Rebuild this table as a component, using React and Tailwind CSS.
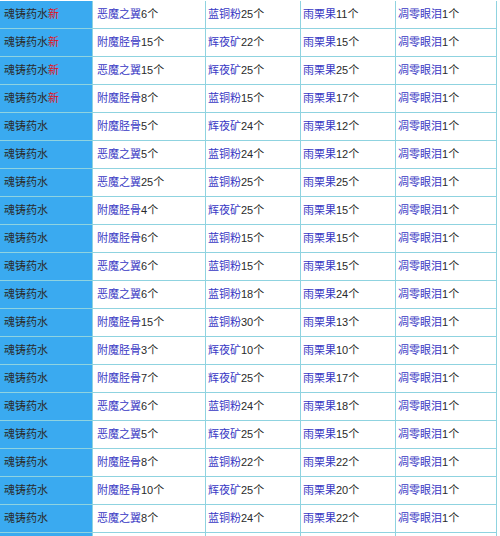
const rows = [
  ["恶魔之翼", 6, "蓝铜粉", 25, 11, true],
  ["附魔胫骨", 15, "辉夜矿", 22, 15, true],
  ["恶魔之翼", 15, "辉夜矿", 25, 25, true],
  ["附魔胫骨", 8, "蓝铜粉", 15, 17, true],
  ["附魔胫骨", 5, "辉夜矿", 24, 12],
  ["恶魔之翼", 5, "蓝铜粉", 24, 12],
  ["恶魔之翼", 25, "蓝铜粉", 25, 25],
  ["附魔胫骨", 4, "辉夜矿", 25, 15],
  ["附魔胫骨", 6, "蓝铜粉", 15, 15],
  ["恶魔之翼", 6, "蓝铜粉", 15, 15],
  ["恶魔之翼", 6, "蓝铜粉", 18, 24],
  ["附魔胫骨", 15, "蓝铜粉", 30, 13],
  ["附魔胫骨", 3, "辉夜矿", 10, 10],
  ["附魔胫骨", 7, "辉夜矿", 25, 17],
  ["恶魔之翼", 6, "蓝铜粉", 24, 18],
  ["恶魔之翼", 5, "辉夜矿", 25, 15],
  ["附魔胫骨", 8, "蓝铜粉", 22, 22],
  ["附魔胫骨", 10, "辉夜矿", 25, 20],
  ["恶魔之翼", 8, "蓝铜粉", 24, 22],
];

const Item = ({ name, count }) => (
  <span>
    <span className="text-[#3838c4]">{name}</span>
    <span className="text-[#2a2a2a]">{count}个</span>
  </span>
);

const cell = "border-r border-b border-[#8fd3e0] flex items-center";

export default function App() {
  return (
    <div
      className="w-[500px] h-[536px] overflow-hidden bg-white pt-px text-[11px] leading-none"
      style={{ fontFamily: '"Liberation Sans", "Noto Sans CJK SC", sans-serif' }}
    >
      {rows.map(([a, ac, b, bc, cc, isNew], i) => (
        <div
          key={i}
          className="grid grid-cols-[93px_113px_95px_95px_101px] h-[28px]"
        >
          <div className={`${cell} bg-[#3aaaf0] pl-[4px] text-[#2a2a2a]`}>
            魂铸药水{isNew && <span className="text-[#e0101a]">新</span>}
          </div>
          <div className={`${cell} pl-[4px]`}>
            <Item name={a} count={ac} />
          </div>
          <div className={`${cell} pl-[2px]`}>
            <Item name={b} count={bc} />
          </div>
          <div className={`${cell} pl-[2px]`}>
            <Item name="雨栗果" count={cc} />
          </div>
          <div className={`${cell} pl-[2px]`}>
            <Item name="凋零眼泪" count={1} />
          </div>
        </div>
      ))}
      <div className="grid grid-cols-[93px_113px_95px_95px_101px] h-[28px]">
        <div className={`${cell} bg-[#3aaaf0]`} />
        <div className={cell} />
        <div className={cell} />
        <div className={cell} />
        <div className={cell} />
      </div>
    </div>
  );
}
